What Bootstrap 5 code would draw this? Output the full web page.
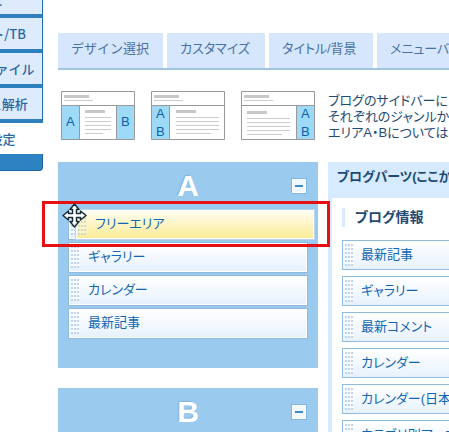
<!DOCTYPE html>
<html lang="ja">
<head>
<meta charset="utf-8">
<meta name="viewport" content="width=device-width, initial-scale=1">
<title>デザイン設定</title>
<link rel="stylesheet" href="https://cdn.jsdelivr.net/npm/bootstrap@5.3.0/dist/css/bootstrap.min.css">
<style>
body{font-family:"Liberation Sans","Noto Sans CJK JP",sans-serif;font-size:13px;line-height:16px;color:#1f4a73;font-feature-settings:"palt"}
a{text-decoration:none;white-space:nowrap}
.side-clip{flex:0 0 43px}
.side-menu{width:107px;margin-left:-64px;margin-top:-17px}
.side-menu a{height:35px;color:#2c67a5;font-weight:500;font-family:"Noto Sans CJK JP",sans-serif;font-feature-settings:normal;background:#deebfc;border-bottom:4px solid #2d7fbd;border-right:1px solid #1f6fb2}
.side-menu a.active{height:31px;background:#fff;border:0}
.side-foot{height:17px;background:#2d82c1;border-right:1px solid #1c64a4;border-bottom:1px solid #1c64a4;border-bottom-right-radius:4px}
.main-area{margin-left:15px;padding-top:33px;min-width:0}
.tab-row{display:grid;grid-template-columns:105px 98px 104px 104px;column-gap:4px;border-bottom:2px solid #a1c5e9}
.tab-row a{height:35px;padding:8px 13px;background:#d6e7fd;color:#4a719f}
.full-kana{font-feature-settings:normal}
.layouts{margin:21px 0 21px 3px;gap:16px}
.layouts svg{flex:none;font-size:13px}
.intro{margin:2px 0 0 -3px}
.area-col{flex:0 0 260px}
.area-box{background:#9bcaef;padding:0 11px 30px;margin-bottom:20px}
.area-head{height:48px}
.area-head h2{font:bold 30px/46px "Liberation Sans",sans-serif;text-shadow:-1px -1px 1px #84b4dd}
.fold{width:16px;height:16px;background:#f1f7ff;border:1px solid #84b5de;box-shadow:inset 0 0 0 1px #fff}
.fold span{width:8px;height:2px;background:#3d8ad1}
.part{color:#0f66b3;background:linear-gradient(#fff,#e7f1fd)}
.part::before{content:"";flex:none;width:9px;height:22px;background:repeating-linear-gradient(transparent 0 2px,#f8fbff 2px 4px),repeating-linear-gradient(90deg,#c0d4eb 0 2px,transparent 2px 3px)}
.area-box .part{height:29px;margin-bottom:4px;border:1px solid #fff;box-shadow:0 0 0 1px #8ebadf;padding:0 0 2px 1px}
.area-box .part::before{margin-right:8px}
.area-box .part.dragged{position:absolute;top:0;left:7px;width:100%;background:linear-gradient(#fffef2,#fbeb96);box-shadow:0 0 0 1px #b9d6ef}
.area-box .dragged::before{background:repeating-linear-gradient(transparent 0 2px,#fcf5c8 2px 4px),repeating-linear-gradient(90deg,#d3d9cf 0 2px,transparent 2px 3px)}
.marker{left:-27px;right:-23px;top:-9px;height:46px;border:3px solid #e60f12;z-index:2}
.cursor{left:-7px;top:-7px;z-index:3}
.parts-box{border-left:4px solid #d6ebff;margin-left:10px}
.parts-head{height:36px;padding:7px 5px;background:#d6ebff;margin-bottom:10px}
.parts-body{padding-left:10px}
.parts-title{border-left:3px solid #d6ebff;height:19px;padding-left:10px;margin-bottom:13px}
.txt-13{font-size:13px;line-height:16px}
.txt-14{font-size:14px;line-height:18px}
.parts-body .part{width:220px;height:30px;margin-bottom:6px;border:1px solid #8fbce0;padding-left:2px}
.parts-body .part::before{margin-right:7px}
</style>
<script src="https://cdn.jsdelivr.net/npm/bootstrap@5.3.0/dist/js/bootstrap.bundle.min.js"></script>
</head>
<body class="bg-white overflow-hidden">
<div class="d-flex vh-100 overflow-hidden">
<aside class="side-clip overflow-hidden">
<nav class="side-menu">
<a class="d-flex align-items-center justify-content-center" href="#">一覧</a>
<a class="d-flex align-items-center justify-content-center" href="#">コメント/TB</a>
<a class="d-flex align-items-center justify-content-center" href="#">アップファイル</a>
<a class="d-flex align-items-center justify-content-center" href="#">アクセス解析</a>
<a class="d-flex align-items-center justify-content-center active" href="#">環境設定</a>
<div class="side-foot"></div>
</nav>
</aside>
<main class="main-area flex-grow-1">
<nav class="tab-row">
<a class="full-kana" href="#">デザイン選択</a><a href="#">カスタマイズ</a><a href="#">タイトル/背景</a><a href="#">メニューバー</a>
</nav>
<div class="layouts d-flex">
<svg width="74" height="49"><path d="M1 15h17v33H1zM56 15h17v33H56z" fill="#9edaf8"/><path d="M.5.5h73v48H.5zM0 14.500h74M18.500 14v34M55.500 14v34" fill="none" stroke="#999"/><path d="M3 5.500h25M24 20.500h20" stroke="#c8c8c8" stroke-width="3"/><path d="M3 9.500h29M24 26.500h26M24 30.500h26M24 34.500h26M24 38.500h26M24 42.500h18" stroke="#ccc"/><text x="5" y="35" fill="#0a62a8">A</text><text x="60" y="35" fill="#0a62a8">B</text></svg>
<svg width="74" height="49"><path d="M1 15h17v33H1z" fill="#9edaf8"/><path d="M.5.5h73v48H.5zM0 14.500h74M18.500 14v34" fill="none" stroke="#999"/><path d="M3 5.500h25M25 20.500h20" stroke="#c8c8c8" stroke-width="3"/><path d="M3 9.500h29M25 26.500h43M25 30.500h43M25 34.500h43M25 38.500h43M25 42.500h35" stroke="#ccc"/><text x="5" y="27" fill="#0a62a8">A</text><text x="5" y="45" fill="#0a62a8">B</text></svg>
<svg width="74" height="49"><path d="M56 15h17v33H56z" fill="#9edaf8"/><path d="M.5.5h73v48H.5zM0 14.500h74M55.500 14v34" fill="none" stroke="#999"/><path d="M3 5.500h25M6 21.500h20" stroke="#c8c8c8" stroke-width="3"/><path d="M3 9.500h29M6 27.500h43M6 31.500h43M6 35.500h43M6 39.500h43M6 43.500h35" stroke="#ccc"/><text x="60" y="27" fill="#0a62a8">A</text><text x="60" y="45" fill="#0a62a8">B</text></svg>
<p class="intro text-nowrap">ブログのサイドバーに<br>それぞれのジャンルか<br>エリアA・Bについては</p>
</div>
<div class="d-flex">
<div class="area-col">
<section class="area-box">
<div class="area-head position-relative d-flex align-items-center justify-content-center"><h2 class="text-white m-0">A</h2><button type="button" aria-label="エリアAを閉じる" class="fold p-0 d-flex align-items-center justify-content-center position-absolute end-0"><span></span></button></div>
<div class="position-relative">
<div class="part d-flex align-items-center"></div>
<a class="part dragged d-flex align-items-center" href="#">フリーエリア</a>
<div class="marker position-absolute"></div>
<svg class="cursor position-absolute" width="25" height="25" viewBox="0 0 25 25"><path d="M12.500 1L17 6.500H14.500V10.500H18.500V8L24 12.500L18.500 17V14.500H14.500V18.500H17L12.500 24L8 18.500H10.500V14.500H6.500V17L1 12.500L6.500 8V10.500H10.500V6.500H8Z" fill="#fff" stroke="#152c3c" stroke-width="1.500" stroke-linejoin="round"/></svg>
</div>
<a class="part d-flex align-items-center" href="#">ギャラリー</a>
<a class="part d-flex align-items-center" href="#">カレンダー</a>
<a class="part d-flex align-items-center mb-0" href="#">最新記事</a>
</section>
<section class="area-box">
<div class="area-head position-relative d-flex align-items-center justify-content-center"><h2 class="text-white m-0">B</h2><button type="button" aria-label="エリアBを閉じる" class="fold p-0 d-flex align-items-center justify-content-center position-absolute end-0"><span></span></button></div>
</section>
</div>
<section class="parts-box flex-grow-1">
<h2 class="parts-head txt-13 fw-bold text-nowrap">ブログパーツ(ここから</h2>
<div class="parts-body">
<h3 class="parts-title txt-14 fw-bold text-nowrap">ブログ情報</h3>
<a class="part d-flex align-items-center" href="#">最新記事</a>
<a class="part d-flex align-items-center" href="#">ギャラリー</a>
<a class="part d-flex align-items-center" href="#">最新コメント</a>
<a class="part d-flex align-items-center" href="#">カレンダー</a>
<a class="part d-flex align-items-center" href="#">カレンダー(日本語)</a>
<a class="part d-flex align-items-center" href="#">カテゴリ別アーカイブ</a>
</div>
</section>
</div>
</main>
</div>
</body>
</html>
